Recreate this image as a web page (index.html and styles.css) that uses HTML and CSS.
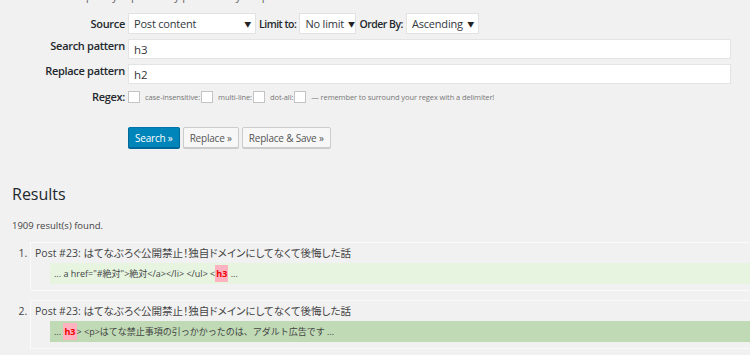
FILE: index.html
```html
<!DOCTYPE html>
<html lang="ja">
<head>
    <meta charset="UTF-8">
    <title>Search Regex</title>
    <link rel="stylesheet" href="styles.css">
</head>
<body>
    <p class="intro">quickly replace any pattern in your posts</p>

    <div class="form">
        <div class="label label-mid">Source</div>
        <div class="field-row">
            <div class="select select-source"><span>Post content</span><i>&#9660;</i></div>
            <span class="inline-label">Limit to:</span>
            <div class="select select-limit"><span>No limit</span><i>&#9660;</i></div>
            <span class="inline-label">Order By:</span>
            <div class="select select-order"><span>Ascending</span><i>&#9660;</i></div>
        </div>

        <div class="label">Search pattern</div>
        <div class="input">h3</div>

        <div class="label">Replace pattern</div>
        <div class="input">h2</div>

        <div class="label label-regex">Regex:</div>
        <div class="regex-row">
            <span class="check"></span>
            <span class="small">case-insensitive:</span><span class="check"></span>
            <span class="small">multi-line:</span><span class="check"></span>
            <span class="small">dot-all:</span><span class="check"></span>
            <span class="small">&mdash; remember to surround your regex with a delimiter!</span>
        </div>
    </div>

    <div class="buttons">
        <button class="btn btn-primary">Search &raquo;</button>
        <button class="btn">Replace &raquo;</button>
        <button class="btn">Replace &amp; Save &raquo;</button>
    </div>

    <h2 class="results-title">Results</h2>
    <p class="count">1909 result(s) found.</p>

    <ol class="results">
        <li class="result">
            <div class="result-title">Post #23: <span class="ja">はてなぶろぐ公開禁止！独自ドメインにしてなくて後悔した話</span></div>
            <div class="snippet">... a href="#絶対"&gt;絶対&lt;/a&gt;&lt;/li&gt; &lt;/ul&gt; &lt;<mark>h3</mark> ...</div>
        </li>
        <li class="result">
            <div class="result-title">Post #23: <span class="ja">はてなぶろぐ公開禁止！独自ドメインにしてなくて後悔した話</span></div>
            <div class="snippet snippet-alt">... <mark>h3</mark>&gt; &lt;p&gt;はてな禁止事項の引っかかったのは、アダルト広告です ...</div>
        </li>
        <li class="result"></li>
    </ol>
</body>
</html>
```

FILE: styles.css
```css
body {
    margin: 0;
    padding: 0 0 0 12px;
    background: #f1f1f1;
    color: #444;
    font-family: 'Open Sans', 'Noto Sans CJK JP', sans-serif;
    font-size: 12px;
    overflow: hidden;
}
.intro {
    margin: -11px 0 0 70px;
    font-size: 11px;
    line-height: 14px;
    color: #666;
}
.form {
    display: grid;
    grid-template-columns: 113px 603px;
    column-gap: 3px;
    row-gap: 5px;
    margin-top: 10px;
}
.label {
    text-align: right;
    font-weight: 600;
    font-size: 11px;
    color: #23282d;
    line-height: 14px;
    letter-spacing: -0.3px;
    white-space: nowrap;
}
.label-mid {
    line-height: 21px;
}
.label-regex {
    margin-top: 1px;
}
.field-row {
    display: flex;
    align-items: center;
}
.select {
    display: flex;
    align-items: center;
    justify-content: space-between;
    box-sizing: border-box;
    height: 21px;
    padding: 0 4px 0 5px;
    background: #fff;
    border: 1px solid #e2e2e2;
    color: #32373c;
    font-size: 11px;
    letter-spacing: -0.2px;
    white-space: nowrap;
}
.select i {
    font-style: normal;
    font-size: 7px;
    color: #222;
    margin-left: 4px;
}
.select-source { width: 128px; }
.select-limit { width: 57px; }
.select-order { width: 73px; }
.inline-label {
    font-weight: 600;
    font-size: 10.5px;
    color: #23282d;
    margin: 0 3px 0 3px;
    letter-spacing: -0.5px;
    white-space: nowrap;
}
.input {
    box-sizing: border-box;
    height: 20px;
    padding: 2px 5px 0;
    background: #fff;
    border: 1px solid #e4e4e4;
    color: #32373c;
    font-size: 11.5px;
    line-height: 16px;
}
.regex-row {
    display: flex;
    align-items: center;
}
.check {
    display: inline-block;
    width: 10px;
    height: 10px;
    background: #fff;
    border: 1px solid #c4c4c4;
    margin-right: 5px;
}
.small {
    font-size: 7.5px;
    color: #777;
    margin-right: 1px;
    letter-spacing: -0.1px;
}
.buttons {
    display: flex;
    gap: 3px;
    margin: 23px 0 0 116px;
}
.btn {
    height: 21px;
    padding: 0 6px;
    font-family: inherit;
    font-size: 10px;
    letter-spacing: -0.2px;
    color: #555;
    background: #f7f7f7;
    border: 1px solid #ccc;
    border-radius: 2px;
    box-shadow: 0 1px 0 #ccc;
}
.btn-primary {
    background: #0085ba;
    border-color: #0073aa #006799 #006799;
    color: #fff;
    box-shadow: 0 1px 0 #006799;
}
.results-title {
    margin: 35px 0 0;
    font-size: 16px;
    font-weight: 400;
    color: #23282d;
    line-height: 22px;
}
.count {
    margin: 14px 0 0;
    font-size: 9.5px;
    line-height: 14px;
}
.results {
    margin: 9px -20px 0 0;
    padding-left: 18px;
    font-size: 10.5px;
}
.result {
    height: 47px;
    margin-bottom: 9px;
    border: 1px solid #fafafa;
    padding: 0 0 0 4px;
}
.result-title {
    line-height: 20px;
    color: #444;
    font-size: 10.5px;
}
.ja {
    font-feature-settings: "palt";
}
.snippet {
    margin-left: 15px;
    height: 21px;
    line-height: 21px;
    padding-left: 4px;
    background: #e6f4e0;
    font-size: 9px;
    color: #444;
}
.snippet-alt {
    background: #c0dab6;
}
mark {
    background: #ffb3c0;
    color: #e00;
    font-weight: 700;
    padding: 2px 1px;
}
```
